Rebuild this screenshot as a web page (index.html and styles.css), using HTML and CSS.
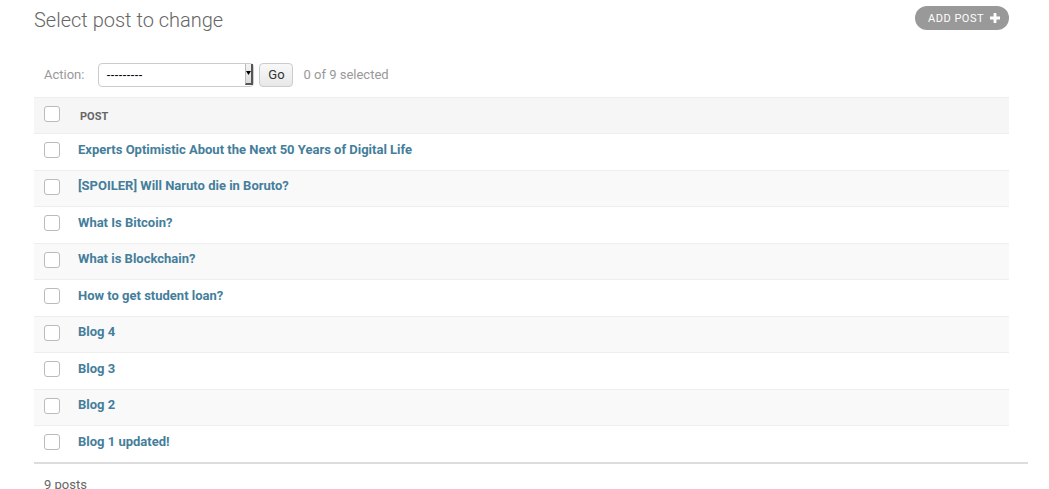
FILE: index.html
```html
<!DOCTYPE html>
<html>
<head>
<meta charset="utf-8">
<link rel="stylesheet" href="styles.css">
</head>
<body>
<div class="content">
  <div class="title-row">
    <h1 class="title">Select post to change</h1>
    <a class="addlink" href="#">ADD POST
      <svg class="plus" width="10" height="10" viewBox="0 0 10 10"><path d="M3.6 0h2.8v3.6H10v2.8H6.4V10H3.6V6.4H0V3.6h3.6z" fill="#fff"/></svg>
    </a>
  </div>
  <div class="actions">
    <span class="action-label">Action:</span>
    <span class="select-wrap">
      <select class="action-select"><option>---------</option></select>
      <span class="select-arrow"><svg width="5" height="4" viewBox="0 0 5 4"><path d="M0 0h5L2.5 4z" fill="#000"/></svg></span>
    </span>
    <button class="go">Go</button>
    <span class="counter">0 of 9 selected</span>
  </div>
  <div class="results">
    <div class="row head">
      <span class="cb"></span>
      <span class="head-label">POST</span>
    </div>
    <div class="row"><span class="cb"></span><a class="link" href="#">Experts Optimistic About the Next 50 Years of Digital Life</a></div>
    <div class="row alt"><span class="cb"></span><a class="link" href="#">[SPOILER] Will Naruto die in Boruto?</a></div>
    <div class="row"><span class="cb"></span><a class="link" href="#">What Is Bitcoin?</a></div>
    <div class="row alt"><span class="cb"></span><a class="link" href="#">What is Blockchain?</a></div>
    <div class="row"><span class="cb"></span><a class="link" href="#">How to get student loan?</a></div>
    <div class="row alt"><span class="cb"></span><a class="link" href="#">Blog 4</a></div>
    <div class="row"><span class="cb"></span><a class="link" href="#">Blog 3</a></div>
    <div class="row alt"><span class="cb"></span><a class="link" href="#">Blog 2</a></div>
    <div class="row"><span class="cb"></span><a class="link" href="#">Blog 1 updated!</a></div>
  </div>
  <div class="paginator">9 posts</div>
</div>
</body>
</html>
```
FILE: styles.css
```css
html, body {
  margin: 0;
  padding: 0;
  background: #fff;
  font-family: Roboto, "Liberation Sans", sans-serif;
  color: #333;
}
.content {
  padding: 0 40px 0 34px;
}
.title-row {
  display: flex;
  justify-content: space-between;
  align-items: flex-start;
  padding-top: 6px;
}
.title {
  margin: 1px 0 0;
  font-size: 20px;
  font-weight: 300;
  line-height: 26px;
  color: #666;
}
.addlink {
  display: flex;
  align-items: center;
  height: 24px;
  box-sizing: border-box;
  padding: 0 9px 0 13px;
  background: #999;
  border-radius: 15px;
  color: #fff;
  font-size: 11px;
  letter-spacing: 0.5px;
  text-decoration: none;
  gap: 6px;
}
.plus { display: block; }
.actions {
  display: flex;
  align-items: center;
  height: 45px;
  margin-top: 19px;
  padding: 0 10px;
  font-size: 13px;
}
.action-label {
  color: #999;
  margin-right: 14px;
}
.select-wrap {
  position: relative;
  display: block;
  width: 156px;
  height: 24px;
}
.action-select {
  appearance: none;
  -webkit-appearance: none;
  width: 156px;
  height: 24px;
  box-sizing: border-box;
  border: 1px solid #ccc;
  border-radius: 4px;
  background: #fff;
  padding: 0 0 0 7px;
  font-family: "Liberation Sans", Arial, sans-serif;
  font-size: 12px;
  color: #000;
  margin: 0;
}
.select-arrow {
  position: absolute;
  right: 1px;
  top: 1px;
  width: 8px;
  height: 21px;
  box-sizing: border-box;
  background: linear-gradient(#f4f4f4, #dcdcdc);
  border-right: 2px solid #555;
  border-bottom: 2px solid #555;
  border-left: 1px solid #bbb;
  display: flex;
  align-items: center;
  justify-content: center;
}
.select-arrow svg { display: block; }
.go {
  margin-left: 5px;
  width: 34px;
  height: 24px;
  box-sizing: border-box;
  border: 1px solid #ccc;
  border-radius: 4px;
  background: linear-gradient(#f8f8f8, #e8e8e8);
  font-family: Roboto, "Liberation Sans", sans-serif;
  font-size: 13px;
  color: #333;
  padding: 0;
}
.counter {
  margin-left: 10px;
  color: #999;
}
.results {
  display: flex;
  flex-direction: column;
}
.row {
  display: flex;
  align-items: center;
  height: 36.5px;
  box-sizing: border-box;
  border-top: 1px solid #eee;
  padding-left: 10px;
  background: #fff;
}
.row.alt { background: #f9f9f9; }
.row.head {
  height: 36px;
  background: #f6f6f6;
  border-top: 1px solid #eee;
}
.cb {
  display: block;
  width: 16px;
  height: 16px;
  box-sizing: border-box;
  border: 1px solid #bbb;
  border-radius: 3px;
  background: #fff;
  margin-right: 18px;
  margin-bottom: 3px;
}
.head-label {
  font-size: 11px;
  font-weight: bold;
  color: #666;
  margin-left: 2px;
  margin-top: 1px;
}
.link {
  font-size: 13px;
  line-height: 16px;
  margin-bottom: 4px;
  font-weight: bold;
  color: #447e9b;
  text-decoration: none;
}
.paginator {
  margin-right: -19px;
  border-top: 2px solid #ddd;
  padding: 10px 10px;
  font-size: 13px;
  line-height: 22px;
  color: #666;
}
```
